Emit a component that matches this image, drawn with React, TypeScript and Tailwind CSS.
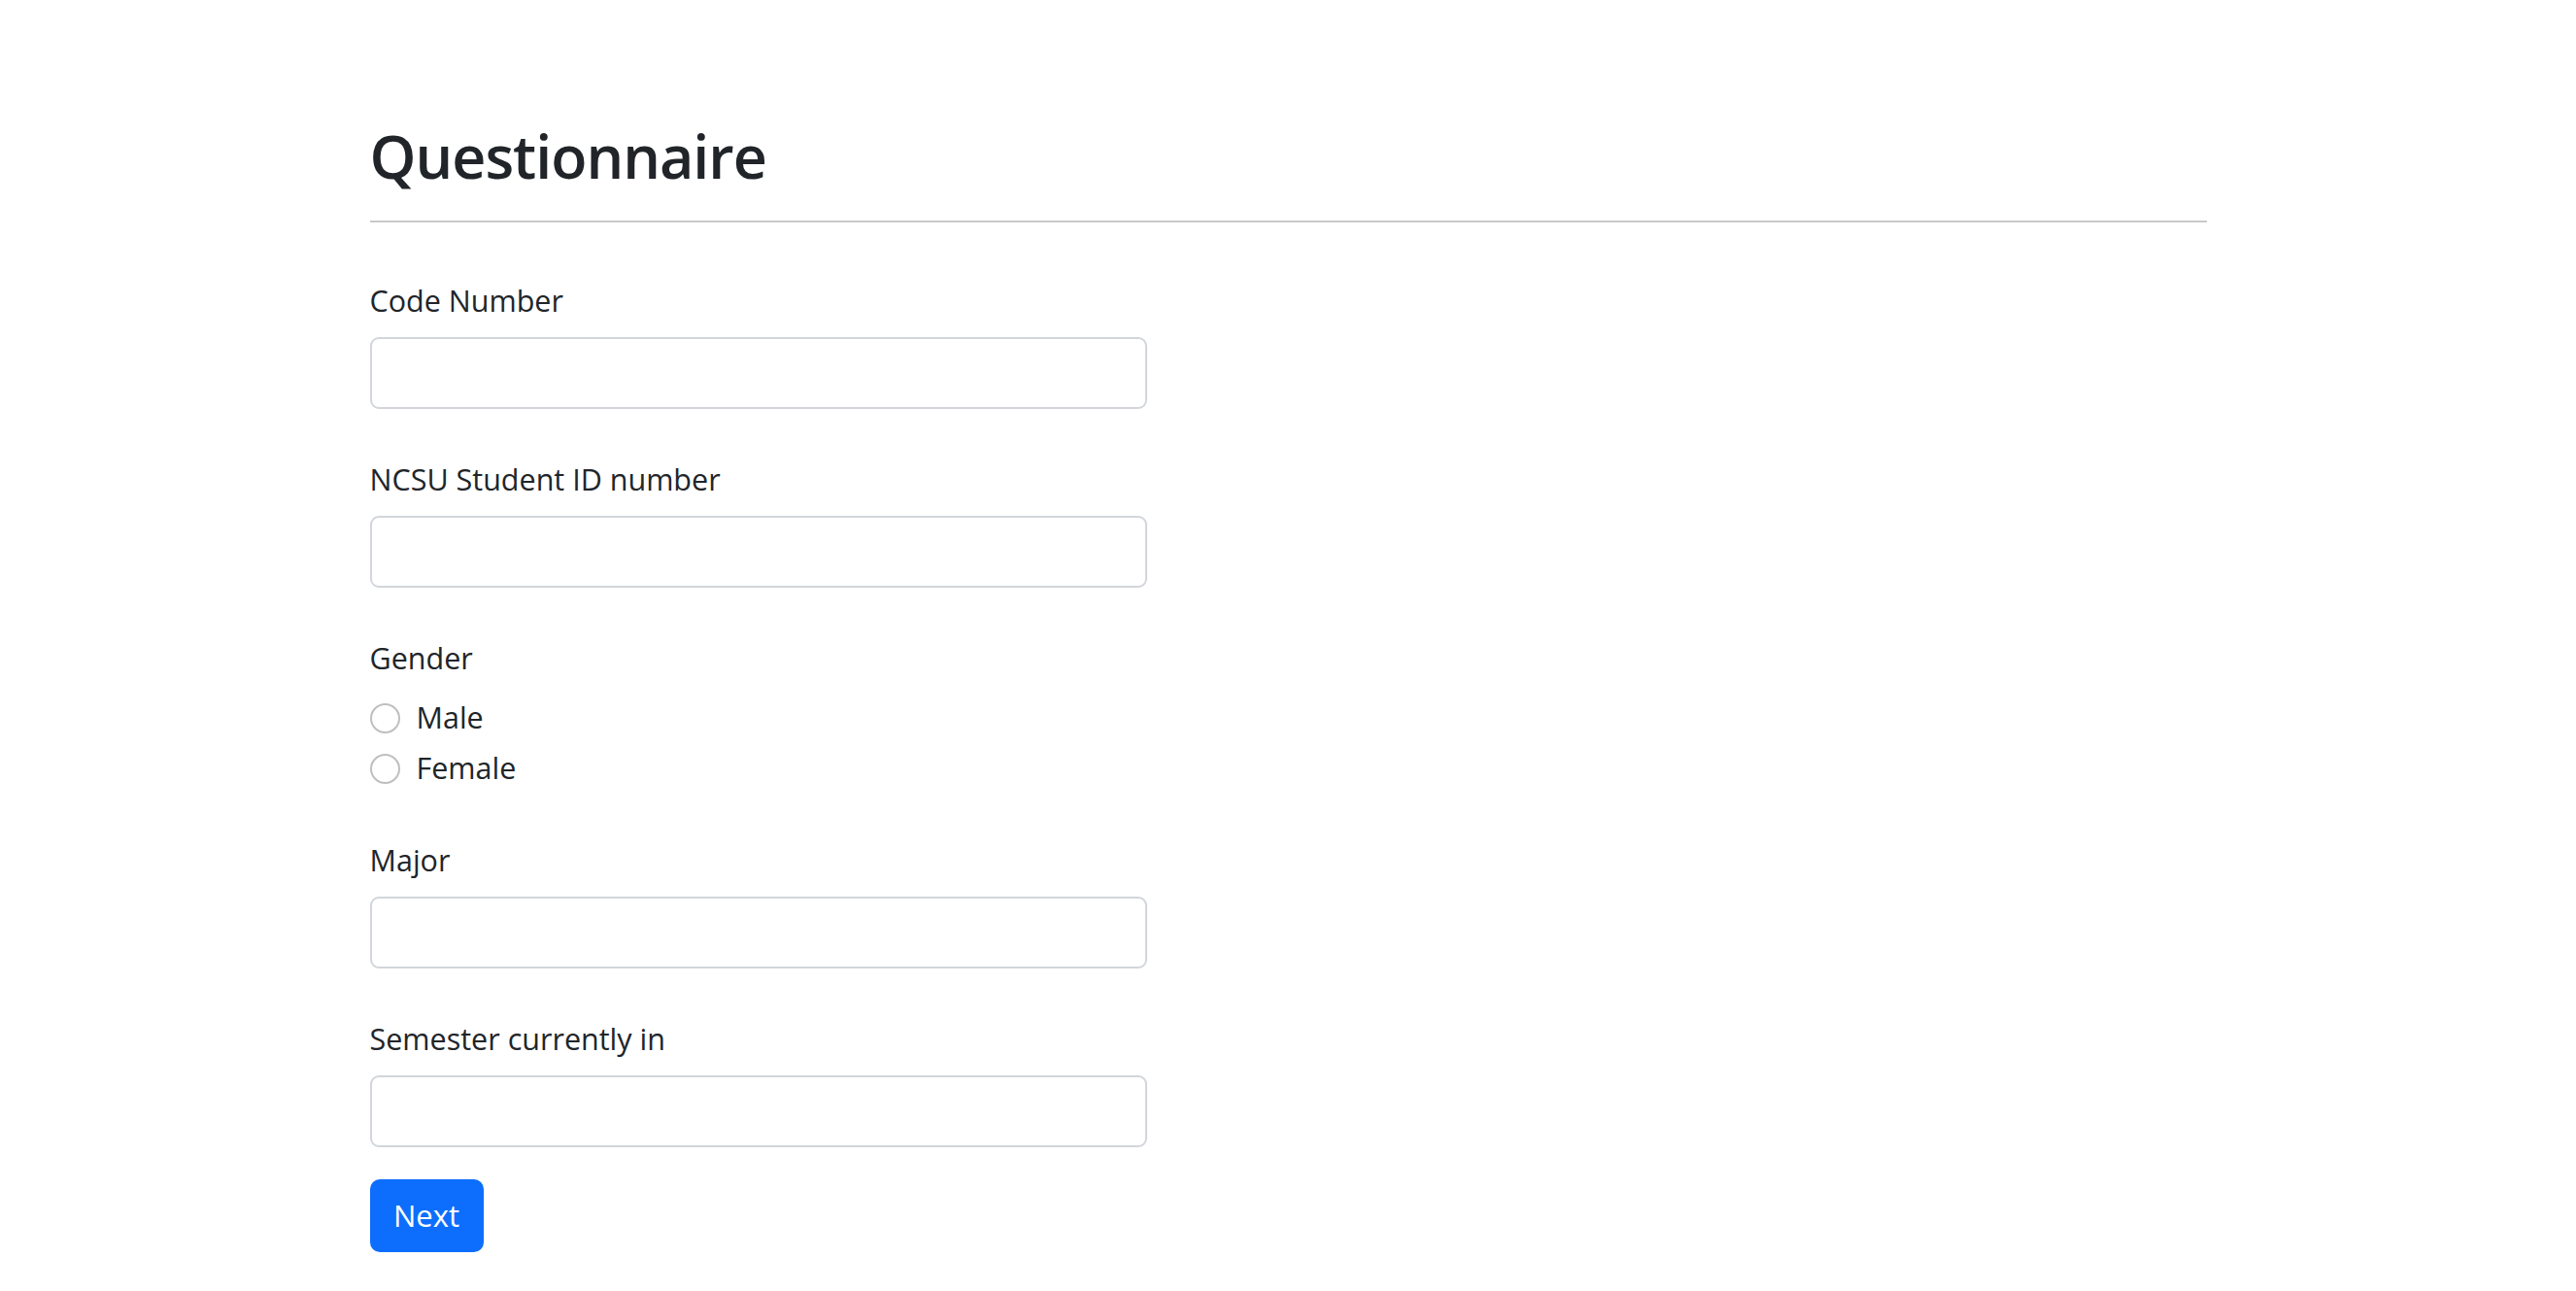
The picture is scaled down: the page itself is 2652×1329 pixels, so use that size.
export default function App() {
  const fields = [
    { label: "Code Number", gap: "mt-[59px]" },
    { label: "NCSU Student ID number", gap: "mt-[51px]" },
  ];

  const inputCls =
    "mt-[17px] block w-full h-[74px] rounded-[9px] border-2 border-[#d2d6db] bg-white px-4 text-[31px] outline-none";
  const labelCls = "block text-[30.5px] leading-[42px]";

  return (
    <div className="min-h-screen bg-white text-[#212529] font-['Open_Sans',sans-serif]">
      <div className="mx-auto w-[1891px] pt-[123px] pb-[40px]">
        <h1 className="text-[61px] leading-[76px] font-semibold tracking-[-1px]">Questionnaire</h1>
        <hr className="mt-[28px] border-0 h-[2px] bg-[#c8c9ca]" />

        <form className="w-[800px]">
          {fields.map((f) => (
            <div key={f.label} className={f.gap}>
              <label className={labelCls}>{f.label}</label>
              <input type="text" className={inputCls} />
            </div>
          ))}

          <div className="mt-[51px]">
            <div className={labelCls}>Gender</div>
            <div className="mt-[20px] flex flex-col gap-[10px]">
              {["Male", "Female"].map((g) => (
                <label key={g} className="flex items-center gap-[17px] h-[42px] text-[30.5px]">
                  <input
                    type="radio"
                    name="gender"
                    className="appearance-none w-[31px] h-[31px] rounded-full border-2 border-[#bfbfbf] bg-white m-0"
                  />
                  <span>{g}</span>
                </label>
              ))}
            </div>
          </div>

          <div className="mt-[52px]">
            <label className={labelCls}>Major</label>
            <input type="text" className={inputCls} />
          </div>

          <div className="mt-[51px]">
            <label className={labelCls}>Semester currently in</label>
            <input type="text" className={inputCls} />
          </div>

          <button
            type="button"
            className="mt-[33px] h-[75px] w-[117px] rounded-[10px] bg-[#0d6efd] text-white text-[31px]"
          >
            Next
          </button>
        </form>
      </div>
    </div>
  );
}
